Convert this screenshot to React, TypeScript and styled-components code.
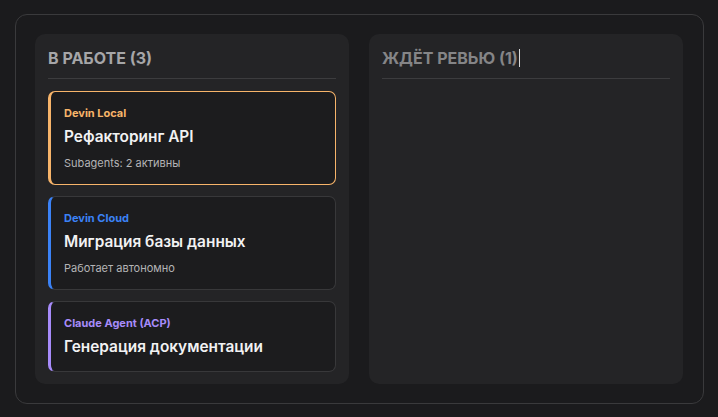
import React from "react";
import styled, { createGlobalStyle } from "styled-components";

const Global = createGlobalStyle`
  html, body { margin: 0; padding: 0; background: #1b1b1d; }
  body {
    font-family: Inter, "Noto Sans", "Liberation Sans", sans-serif;
    padding: 14px 14px 0 15px;
    -webkit-font-smoothing: antialiased;
  }
`;

const Frame = styled.div`
  width: 689px;
  box-sizing: border-box;
  border: 1px solid #3a3a3c;
  border-radius: 12px;
  padding: 19px;
  display: grid;
  grid-template-columns: 314px 314px;
  column-gap: 20px;
  align-items: stretch;
`;

const Column = styled.section`
  background: #242426;
  border-radius: 10px;
  padding: 14px 13px 12px;
  display: flex;
  flex-direction: column;
`;

const Header = styled.h2<{ $dim?: boolean }>`
  margin: 0;
  font-size: 16px;
  line-height: 20px;
  font-weight: 700;
  color: ${(p) => (p.$dim ? "#858587" : "#a6a6a8")};
  padding-bottom: 10px;
  border-bottom: 1px solid #3c3c3e;
  margin-bottom: 12px;
  display: flex;
  align-items: center;
`;

const Caret = styled.span`
  display: inline-block;
  width: 1px;
  height: 18px;
  margin-left: 1px;
  background: #d8d8d8;
`;

const CardList = styled.div`
  display: flex;
  flex-direction: column;
  gap: 11px;
`;

const Card = styled.div<{ $accent: string; $active?: boolean }>`
  background: #1c1c1e;
  border: 1px solid ${(p) => (p.$active ? p.$accent : "#38383a")};
  border-left: 3px solid ${(p) => p.$accent};
  border-radius: 7px;
  padding: 14px 16px 14px 13px;
`;

const Agent = styled.div<{ $color: string }>`
  font-size: 11px;
  line-height: 14px;
  font-weight: 700;
  color: ${(p) => p.$color};
`;

const Title = styled.div`
  margin-top: 7px;
  font-size: 15.4px;
  line-height: 20px;
  font-weight: 600;
  color: #f2f2f3;
`;

const Sub = styled.div`
  margin-top: 9px;
  margin-bottom: -1px;
  font-size: 11px;
  line-height: 15px;
  color: #b4b4b6;
`;

type Task = { agent: string; color: string; title: string; sub?: string; active?: boolean };

const tasks: Task[] = [
  { agent: "Devin Local", color: "#f7b46a", title: "Рефакторинг API", sub: "Subagents: 2 активны", active: true },
  { agent: "Devin Cloud", color: "#3b82f6", title: "Миграция базы данных", sub: "Работает автономно" },
  { agent: "Claude Agent (ACP)", color: "#a78bfa", title: "Генерация документации" },
];

export default function App() {
  return (
    <>
      <Global />
      <Frame>
        <Column>
          <Header>В РАБОТЕ (3)</Header>
          <CardList>
            {tasks.map((t) => (
              <Card key={t.title} $accent={t.color} $active={t.active}>
                <Agent $color={t.color}>{t.agent}</Agent>
                <Title>{t.title}</Title>
                {t.sub && <Sub>{t.sub}</Sub>}
              </Card>
            ))}
          </CardList>
        </Column>
        <Column>
          <Header $dim>
            ЖДЁТ РЕВЬЮ (1)
            <Caret />
          </Header>
        </Column>
      </Frame>
    </>
  );
}
